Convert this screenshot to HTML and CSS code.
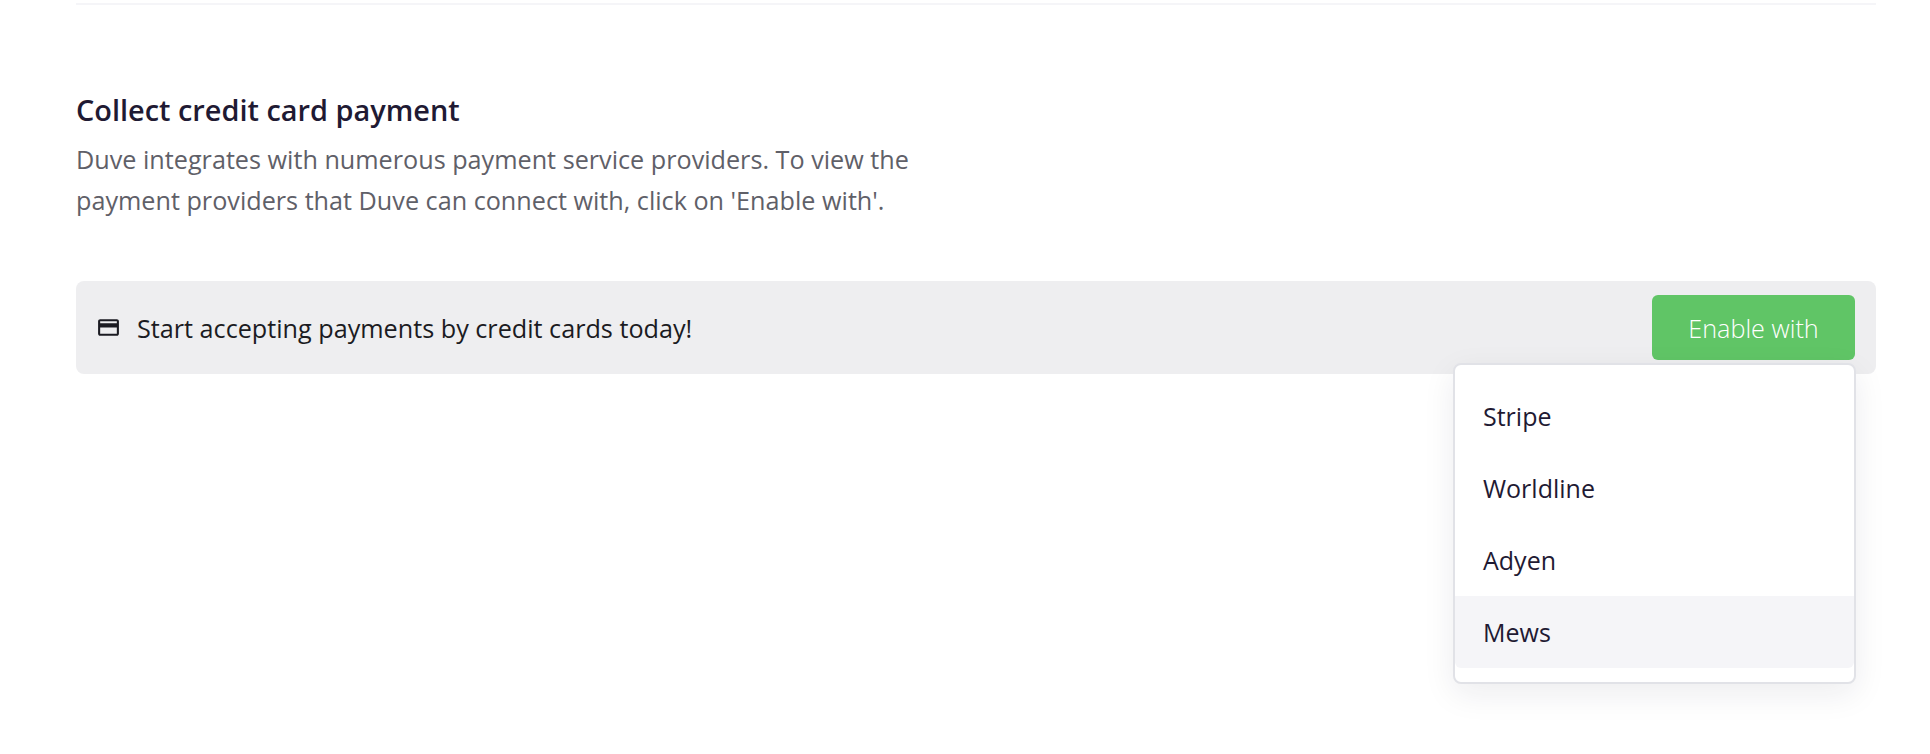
FILE: index.html
```html
<!DOCTYPE html>
<html lang="en">
<head>
<meta charset="utf-8">
<title>Collect credit card payment</title>
<link rel="stylesheet" href="styles.css">
</head>
<body>
<main class="page">
  <hr class="divider">
  <section class="intro">
    <h2 class="title">Collect credit card payment</h2>
    <p class="desc">Duve integrates with numerous payment service providers. To view the<br>payment providers that Duve can connect with, click on 'Enable with'.</p>
  </section>
  <div class="banner">
    <div class="banner-msg">
      <svg class="card-icon" viewBox="0 0 24 24" aria-hidden="true"><path d="M20 4H4c-1.11 0-1.99.89-1.99 2L2 18c0 1.11.89 2 2 2h16c1.11 0 2-.89 2-2V6c0-1.11-.89-2-2-2zm0 14H4v-6h16v6zm0-10H4V6h16v2z"/></svg>
      <span>Start accepting payments by credit cards today!</span>
    </div>
    <div class="action">
      <button class="enable" type="button">Enable with</button>
      <ul class="menu">
        <li class="menu-item">Stripe</li>
        <li class="menu-item">Worldline</li>
        <li class="menu-item">Adyen</li>
        <li class="menu-item is-hover">Mews</li>
      </ul>
    </div>
  </div>
</main>
</body>
</html>
```
FILE: styles.css
```css
* { box-sizing: border-box; }
html, body { margin: 0; height: 100%; background: #fff; overflow: hidden; }
body { font-family: "Open Sans", "Noto Sans", sans-serif; color: #1f1a33; }
.page { padding: 3px 54px 0 76px; }
.divider { margin: 0; border: 0; height: 2px; background: #f5f5f8; }
.intro { padding-top: 85px; }
.title { margin: 0; font-size: 28.9px; line-height: 40px; font-weight: 600; color: #1f1a33; }
.desc { margin: 9px 0 0; font-size: 25.2px; line-height: 41px; color: #5f6068; }
.banner { margin-top: 60px; height: 93px; background: #eeeef0; border-radius: 8px; padding: 14px 21px 14px 20px; display: flex; justify-content: space-between; align-items: flex-start; }
.banner-msg { display: flex; align-items: center; gap: 16px; height: 65px; font-size: 25.2px; color: #1b1b22; }
.card-icon { width: 25px; height: 25px; fill: #1b1b22; flex: none; }
.action { position: relative; }
.enable { display: block; width: 203px; height: 65px; border: 0; border-radius: 6px; background: #60c566; color: #fff; font: 300 25.2px "Open Sans", sans-serif; padding: 0; }
.menu { position: absolute; top: 68px; right: -1px; width: 403px; height: 321px; margin: 0; padding: 15px 0; list-style: none; background: #fff; border: 2px solid #e1e2e7; border-radius: 8px; box-shadow: 0 10px 32px rgba(31, 26, 51, .08); }
.menu-item { height: 72px; padding: 0 28px; display: flex; align-items: center; font-size: 25px; color: #1f1a33; }
.is-hover { background: #f5f5f8; border-radius: 0 0 6px 6px; }
```
